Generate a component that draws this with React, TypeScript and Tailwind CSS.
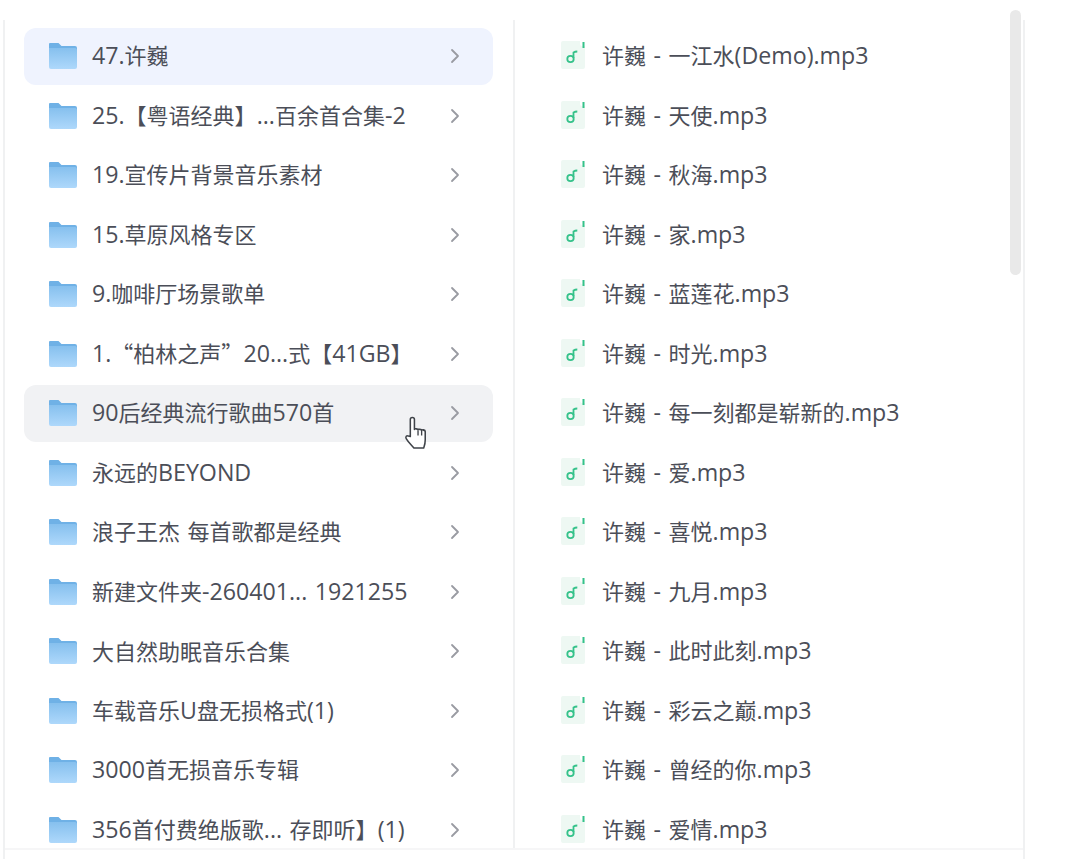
import React from "react";
import { ChevronRight } from "lucide-react";

const folders = [
  "47.许巍",
  "25.【粤语经典】...百余首合集-2",
  "19.宣传片背景音乐素材",
  "15.草原风格专区",
  "9.咖啡厅场景歌单",
  "1.“柏林之声”20...式【41GB】",
  "90后经典流行歌曲570首",
  "永远的BEYOND",
  "浪子王杰 每首歌都是经典",
  "新建文件夹-260401... 1921255",
  "大自然助眠音乐合集",
  "车载音乐U盘无损格式(1)",
  "3000首无损音乐专辑",
  "356首付费绝版歌... 存即听】(1)",
];

const songs = [
  "一江水(Demo)",
  "天使",
  "秋海",
  "家",
  "蓝莲花",
  "时光",
  "每一刻都是崭新的",
  "爱",
  "喜悦",
  "九月",
  "此时此刻",
  "彩云之巅",
  "曾经的你",
  "爱情",
];

// latin runs sit a bit larger than the CJK in the screenshot
const Label = ({ text }: { text: string }) => (
  <>
    {text.split(/([\x20-\x7e]+)/).map((part, i) =>
      i % 2 === 1 ? (
        <span key={i} className="font-['Open_Sans'] text-[23.200px] [word-spacing:1.500px]">
          {part}
        </span>
      ) : (
        part
      ),
    )}
  </>
);

const FolderIcon = () => (
  <svg width="28" height="26" viewBox="0 0 28 26" className="shrink-0">
    <defs>
      <linearGradient id="folderBody" x1="0" y1="0" x2="0" y2="1">
        <stop offset="0" stopColor="#86c0ee" />
        <stop offset="1" stopColor="#aed8fb" />
      </linearGradient>
    </defs>
    <path d="M1 0h8.500l3 3H26a2 2 0 0 1 2 2v2H0V1a1 1 0 0 1 1-1z" fill="#6fb1e6" />
    <path d="M0 5h26a2 2 0 0 1 2 2v17a2 2 0 0 1-2 2H2a2 2 0 0 1-2-2z" fill="url(#folderBody)" />
  </svg>
);

const MusicIcon = () => (
  <svg width="24" height="28" viewBox="0 0 24 28" className="mb-0.5 shrink-0">
    <path d="M2 0h17v3a2 2 0 0 0 2 2h3v21a2 2 0 0 1-2 2H2a2 2 0 0 1-2-2V2a2 2 0 0 1 2-2z" fill="#eef8f3" />
    <rect x="21.500" y="1" width="2" height="6" fill="#35c28a" />
    <circle cx="9.500" cy="18" r="3.200" fill="none" stroke="#35c28a" strokeWidth="1.800" />
    <path d="M12.500 17V11.500c1.200-.8 2.400-1 3.800-1" fill="none" stroke="#35c28a" strokeWidth="1.800" />
  </svg>
);

const HandCursor = () => (
  <svg width="26" height="35" viewBox="0 0 25 34" className="absolute left-[404px] top-[416px]">
    <path
      d="M6 20V3.500a2 2 0 0 1 4 0V13c0-1 3.500-1 3.500.5 0-1 3.500-1 3.500.5 0-1 3.500-.8 3.500 1v8c0 4-.5 5-1.500 8H9.500C7 28 4 25.500 2 22c-1-1.800.6-3.500 2-2.500z"
      fill="#fff"
      stroke="#3f4349"
      strokeWidth="1.500"
      strokeLinejoin="round"
    />
    <path d="M13.500 14v5M17 14.500V19" fill="none" stroke="#3f4349" strokeWidth="1.300" />
  </svg>
);

export default function App() {
  return (
    <div className="relative h-[859px] w-[1080px] overflow-hidden bg-white pt-5 font-['Noto_Sans_CJK_SC',sans-serif] text-[22px] text-[#4b4e58]">
      <div className="ml-[3px] h-[839px] w-[1022px] border-x-2 border-[#f0f1f2]">
        <div className="flex h-[830px] border-b-2 border-[#f6f6f7]">
          {/* folders */}
          <div className="flex w-[510px] shrink-0 flex-col gap-[2.500px] border-r-2 border-[#f0f1f2] pt-[7.500px] pl-[19px] pr-5">
            {folders.map((name, i) => (
              <div
                key={name}
                className={`flex h-[57px] shrink-0 items-center rounded-xl pl-[25px] pr-[26px] ${
                  i === 0 ? "bg-[#eff3fe]" : i === 6 ? "bg-[#f1f2f4]" : ""
                }`}
              >
                <FolderIcon />
                <span className="ml-[15px] flex-1 whitespace-nowrap pb-px">
                  <Label text={name} />
                </span>
                <ChevronRight className="h-6 w-6 text-[#999ba2]" strokeWidth={1.800} />
              </div>
            ))}
          </div>

          {/* files */}
          <div className="relative flex flex-1 flex-col gap-[2.500px] pt-[7.500px] pl-[46px]">
            {songs.map((name) => (
              <div key={name} className="flex h-[57px] shrink-0 items-center">
                <MusicIcon />
                <span className="ml-[17px] whitespace-nowrap pb-px">
                  <Label text={`许巍 - ${name}.mp3`} />
                </span>
              </div>
            ))}
            <div className="absolute right-0.5 top-[-10px] h-[265px] w-[11px] rounded-md bg-[#e9e9e9]" />
          </div>
        </div>
      </div>
      <HandCursor />
    </div>
  );
}
